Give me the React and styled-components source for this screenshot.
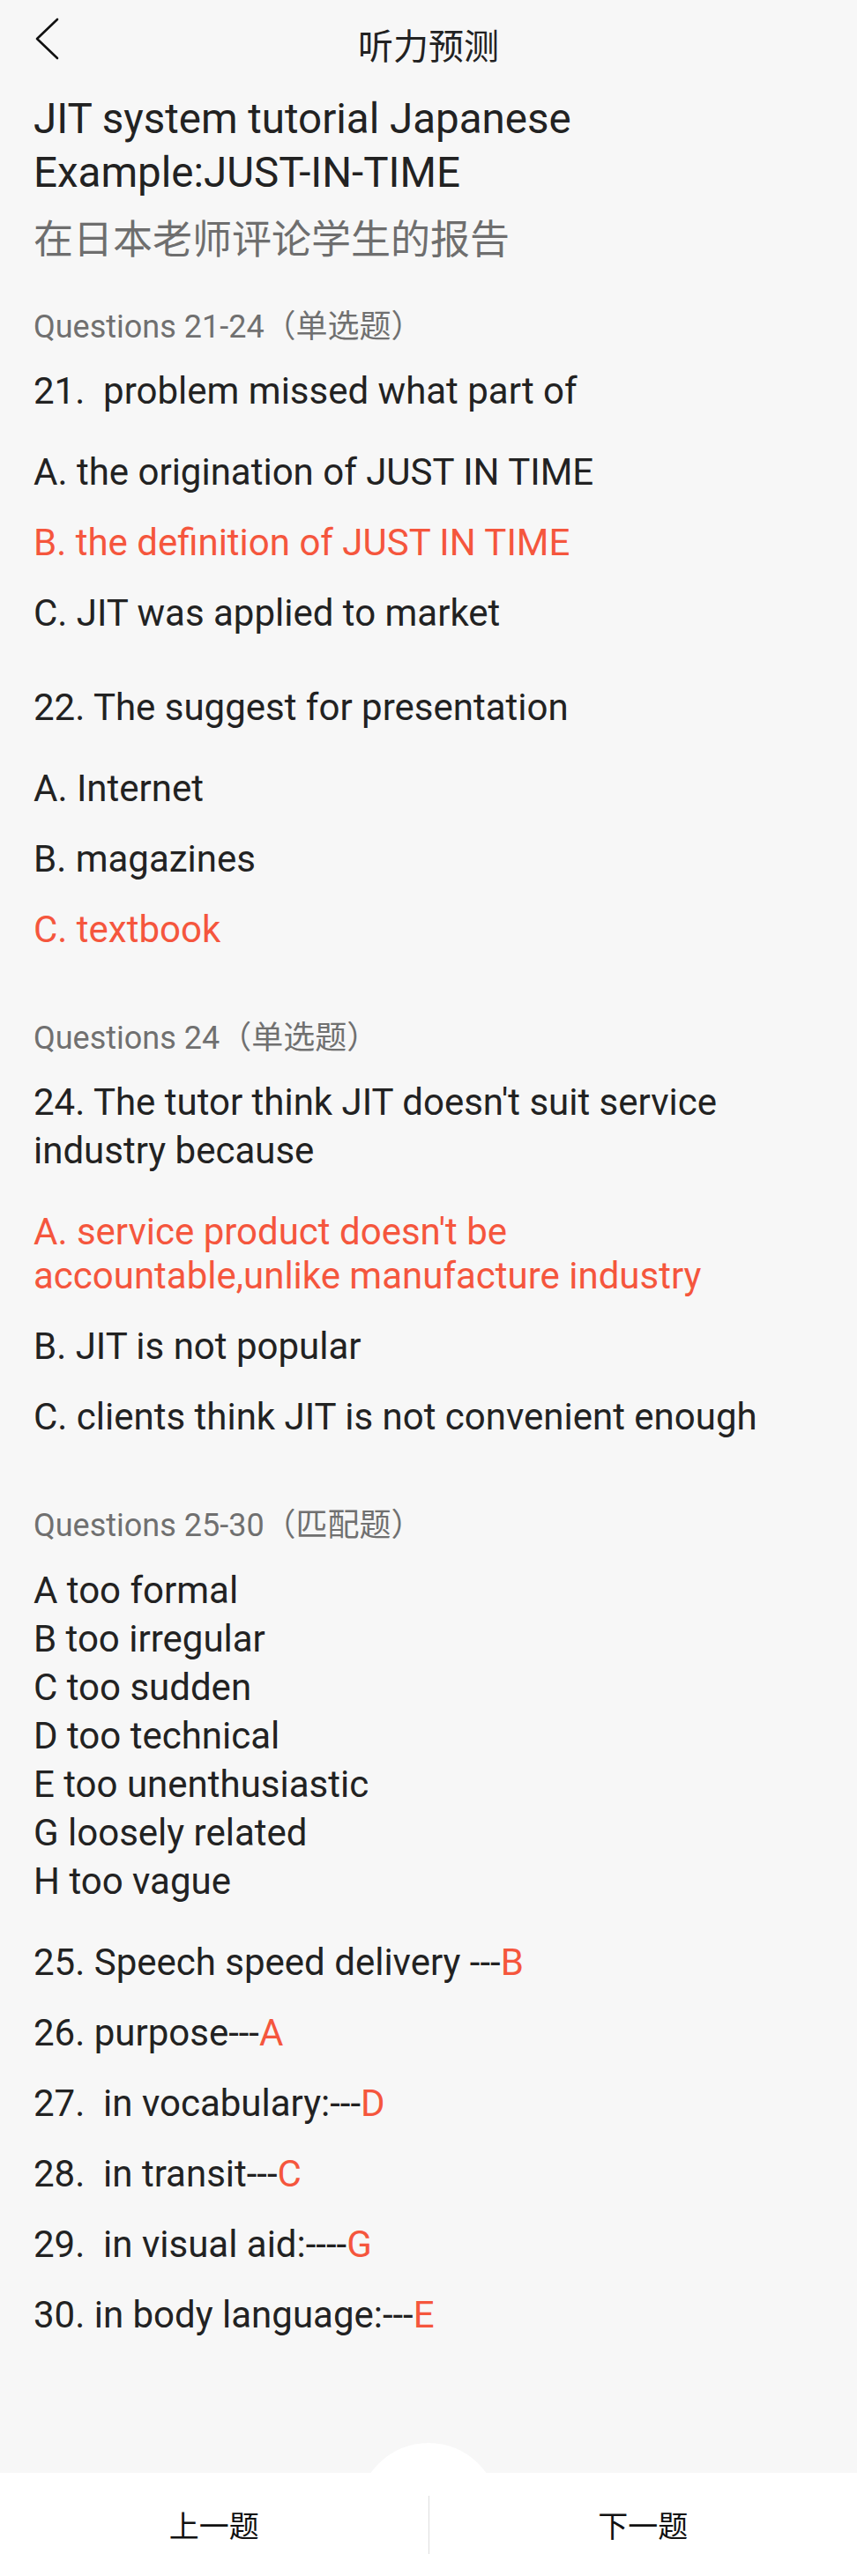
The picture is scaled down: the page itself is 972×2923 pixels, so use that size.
import React from 'react'
import styled, { createGlobalStyle } from 'styled-components'

const GlobalStyle = createGlobalStyle`
  body {
    margin: 0;
    background: #f7f7f7;
    font-family: Roboto, "Noto Sans CJK SC", sans-serif;
  }
`

const Page = styled.div`
  min-height: 100vh;
  display: flex;
  flex-direction: column;
  background: #f7f7f7;
  color: #222;
`

const Header = styled.div`
  height: 100px;
  display: grid;
  grid-template-columns: 1fr auto 1fr;
  align-items: center;
  padding: 0 40px;
`

const Back = styled.svg`
  align-self: start;
  margin-top: 20px;
`

const HeaderTitle = styled.div`
  font-family: "Noto Sans CJK SC", sans-serif;
  font-size: 40px;
  color: #222;
`

const Content = styled.div`
  padding: 0 60px 0 38px;
`

const Title = styled.div`
  margin-top: 5px;
  font-size: 47.5px;
  line-height: 61px;
  color: #222;
`

const Subtitle = styled.div`
  margin-top: 12px;
  font-family: "Noto Sans CJK SC", sans-serif;
  font-size: 45px;
  line-height: 60px;
  color: #6e6e6e;
`

const Section = styled.div`
  margin-top: 74px;
  ${Subtitle} + & {
    margin-top: 48px;
  }
`

const Label = styled.div`
  font-size: 36px;
  line-height: 48px;
  color: #707070;
`

const Question = styled.div`
  margin-top: 54px;
  font-size: 42px;
  line-height: 55px;
  white-space: pre-wrap;
  ${Label} + & {
    margin-top: 21px;
  }
`

const MatchList = styled.div`
  margin-top: 22px;
  font-size: 42px;
  line-height: 55px;
`

const Option = styled.div`
  margin-top: 30px;
  font-size: 42px;
  line-height: 50px;
  white-space: pre-wrap;
  color: ${p => (p.$correct ? '#f5563d' : '#222')};
  ${Question} + &, ${MatchList} + & {
    margin-top: 40px;
  }
`

const Red = styled.span`
  color: #f5563d;
`

const BottomBar = styled.div`
  position: relative;
  margin-top: auto;
  height: 117px;
  display: flex;
  align-items: center;
  background: #fff;
`

const Bump = styled.div`
  position: absolute;
  left: 50%;
  top: -34px;
  width: 160px;
  height: 80px;
  border-radius: 80px 80px 0 0;
  background: #fff;
  transform: translateX(-50%);
`

const NavButton = styled.div`
  position: relative;
  flex: 1;
  text-align: center;
  font-family: "Noto Sans CJK SC", sans-serif;
  font-size: 34px;
  color: #111;
`

const Divider = styled.div`
  position: relative;
  width: 1px;
  height: 66px;
  background: #ddd;
`

const sections = [
  {
    label: 'Questions 21-24（单选题）',
    questions: [
      {
        text: '21.  problem missed what part of',
        options: ['A. the origination of JUST IN TIME', 'B. the definition of JUST IN TIME', 'C. JIT was applied to market'],
        answer: 1,
      },
      {
        text: '22. The suggest for presentation',
        options: ['A. Internet', 'B. magazines', 'C. textbook'],
        answer: 2,
      },
    ],
  },
  {
    label: 'Questions 24（单选题）',
    questions: [
      {
        text: "24. The tutor think JIT doesn't suit service industry because",
        options: [
          "A. service product doesn't be accountable,unlike manufacture industry",
          'B. JIT is not popular',
          'C. clients think JIT is not convenient enough',
        ],
        answer: 0,
      },
    ],
  },
]

const matches = [
  'A too formal',
  'B too irregular',
  'C too sudden',
  'D too technical',
  'E too unenthusiastic',
  'G loosely related',
  'H too vague',
]

const answers = [
  ['25. Speech speed delivery ---', 'B'],
  ['26. purpose---', 'A'],
  ['27.  in vocabulary:---', 'D'],
  ['28.  in transit---', 'C'],
  ['29.  in visual aid:----', 'G'],
  ['30. in body language:---', 'E'],
]

const App = () => {
  return (
    <Page>
      <GlobalStyle />
      <Header>
        <Back width="28" height="48" viewBox="0 0 28 48">
          <path d="M25 2 L2 24 L25 46" fill="none" stroke="#111" strokeWidth="2.6" strokeLinecap="round" strokeLinejoin="round" />
        </Back>
        <HeaderTitle>听力预测</HeaderTitle>
        <div />
      </Header>
      <Content>
        <Title>
          JIT system tutorial Japanese
          <br />
          Example:JUST-IN-TIME
        </Title>
        <Subtitle>在日本老师评论学生的报告</Subtitle>
        {sections.map(s => (
          <Section key={s.label}>
            <Label>{s.label}</Label>
            {s.questions.map(q => (
              <React.Fragment key={q.text}>
                <Question>{q.text}</Question>
                {q.options.map((o, i) => (
                  <Option key={o} $correct={i === q.answer}>
                    {o}
                  </Option>
                ))}
              </React.Fragment>
            ))}
          </Section>
        ))}
        <Section>
          <Label>Questions 25-30（匹配题）</Label>
          <MatchList>
            {matches.map(m => (
              <div key={m}>{m}</div>
            ))}
          </MatchList>
          {answers.map(([t, a]) => (
            <Option key={t}>
              {t}
              <Red>{a}</Red>
            </Option>
          ))}
        </Section>
      </Content>
      <BottomBar>
        <Bump />
        <NavButton>上一题</NavButton>
        <Divider />
        <NavButton>下一题</NavButton>
      </BottomBar>
    </Page>
  )
}

export default App
